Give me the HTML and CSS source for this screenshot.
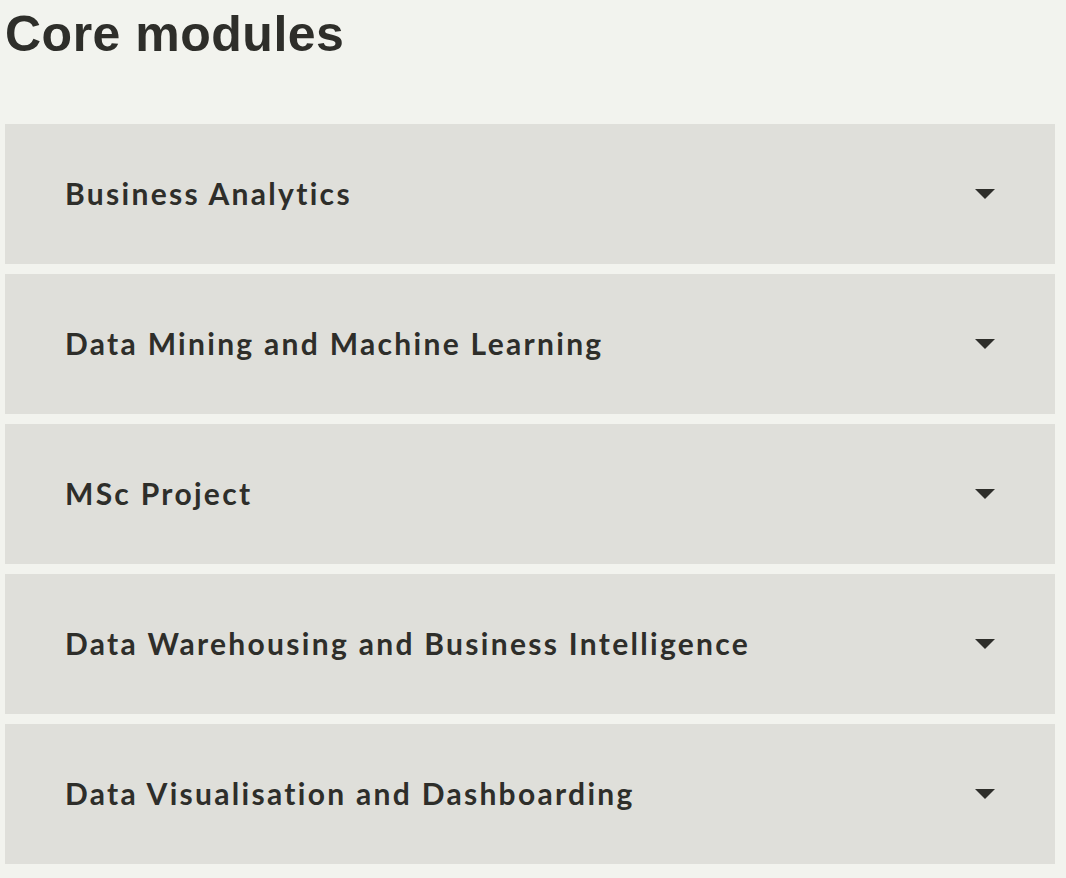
FILE: index.html
```html
<!DOCTYPE html>
<html lang="en">
<head>
<meta charset="utf-8">
<title>Core modules</title>
<link rel="stylesheet" href="styles.css">
</head>
<body>
<main class="page">
  <h1 class="title">Core modules</h1>
  <ul class="accordion">
    <li class="item"><span class="label">Business Analytics</span><span class="caret"></span></li>
    <li class="item"><span class="label">Data Mining and Machine Learning</span><span class="caret"></span></li>
    <li class="item"><span class="label">MSc Project</span><span class="caret"></span></li>
    <li class="item"><span class="label">Data Warehousing and Business Intelligence</span><span class="caret"></span></li>
    <li class="item"><span class="label">Data Visualisation and Dashboarding</span><span class="caret"></span></li>
  </ul>
</main>
</body>
</html>
```

FILE: styles.css
```css
html, body {
  margin: 0;
  padding: 0;
  background: #f2f3ee;
}
.page {
  padding: 0 11px 0 5px;
  color: #2e2e2a;
}
.title {
  margin: 0;
  padding: 4px 0 0 0;
  font-family: "Liberation Sans", Arial, sans-serif;
  font-weight: 700;
  font-size: 50px;
  line-height: 60px;
  letter-spacing: 0.5px;
}
.accordion {
  list-style: none;
  margin: 60px 0 0 0;
  padding: 0;
  display: flex;
  flex-direction: column;
  gap: 10px;
}
.item {
  height: 140px;
  background: #dfdfda;
  display: flex;
  align-items: center;
  justify-content: space-between;
  padding: 0 60px 3px 60px;
  box-sizing: border-box;
}
.label {
  font-family: Lato, "Open Sans", sans-serif;
  font-weight: 700;
  font-size: 30px;
  letter-spacing: 2.3px;
}
.caret {
  width: 0;
  height: 0;
  margin-top: 3px;
  border-left: 10px solid transparent;
  border-right: 10px solid transparent;
  border-top: 10px solid #2e2e2a;
}
```
